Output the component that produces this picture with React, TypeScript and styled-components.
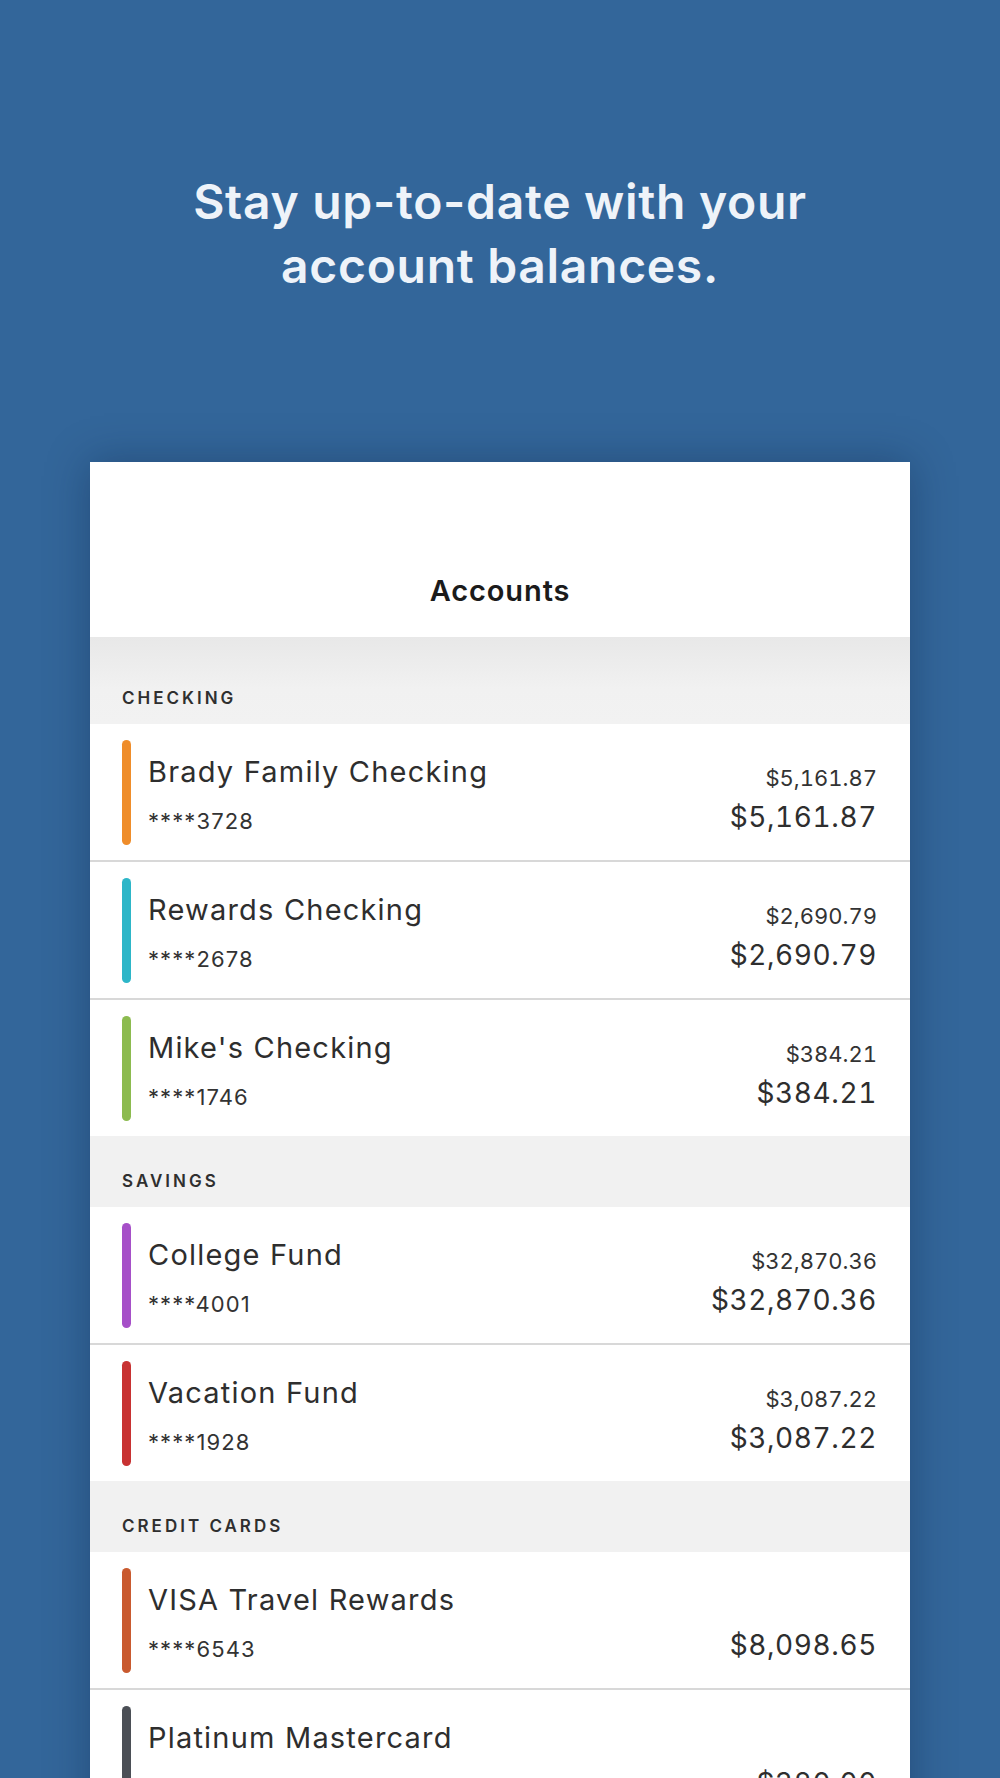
import React from 'react';
import styled, { createGlobalStyle } from 'styled-components';

const GlobalStyle = createGlobalStyle`
  html, body {
    margin: 0;
    padding: 0;
    background: #33669a;
    font-family: Inter, "Noto Sans", "Liberation Sans", sans-serif;
    -webkit-font-smoothing: antialiased;
  }
  body {
    height: 1778px;
    overflow: hidden;
  }
`;

const Page = styled.div`
  display: flex;
  flex-direction: column;
  align-items: center;
  padding-top: 170px;
`;

const Headline = styled.h1`
  margin: 0;
  font-size: 48px;
  line-height: 64px;
  font-weight: 600;
  color: #eef3f9;
  text-align: center;
  letter-spacing: 0.7px;
`;

const Card = styled.div`
  margin-top: 164px;
  width: 820px;
  background: #ffffff;
  box-shadow: 0 0 40px rgba(10, 30, 60, 0.35);
`;

const CardHeader = styled.div`
  height: 175px;
  box-sizing: border-box;
  display: flex;
  align-items: flex-end;
  justify-content: center;
  padding-bottom: 29px;
`;

const CardTitle = styled.div`
  font-size: 29px;
  line-height: 34px;
  font-weight: 600;
  letter-spacing: 0.9px;
  color: #1b1b1b;
`;

const Section = styled.div<{ $first?: boolean }>`
  height: ${(p) => (p.$first ? 87 : 71)}px;
  box-sizing: border-box;
  display: flex;
  align-items: flex-end;
  padding: 0 0 16px 32px;
  background: ${(p) =>
    p.$first ? 'linear-gradient(180deg, #e8e8e8 0%, #f1f1f1 60%, #f2f2f2 100%)' : '#f1f1f1'};
`;

const SectionLabel = styled.div`
  font-size: 17px;
  line-height: 20px;
  font-weight: 600;
  letter-spacing: 3px;
  color: #2f2f2f;
`;

const Row = styled.div<{ $divider: boolean }>`
  display: flex;
  box-sizing: border-box;
  height: ${(p) => (p.$divider ? 138 : 136)}px;
  padding: 16px 33px 15px 32px;
  border-bottom: ${(p) => (p.$divider ? '2px solid #d8d8d8' : 'none')};
`;

const ColorBar = styled.div<{ $color: string }>`
  width: 9px;
  border-radius: 5px;
  background: ${(p) => p.$color};
  flex-shrink: 0;
`;

const Info = styled.div`
  flex: 1;
  display: flex;
  flex-direction: column;
  padding: 14px 0 0 17px;
`;

const Name = styled.div`
  font-size: 29px;
  line-height: 36px;
  letter-spacing: 1.2px;
  color: #2e2e2e;
`;

const Mask = styled.div`
  margin-top: 17px;
  font-size: 22px;
  line-height: 28px;
  letter-spacing: 1.1px;
  color: #333333;
`;

const Amounts = styled.div`
  display: flex;
  flex-direction: column;
  align-items: flex-end;
  justify-content: flex-end;
  padding-bottom: 11px;
  font-variant-numeric: tabular-nums;
`;

const SmallAmount = styled.div`
  font-size: 22px;
  line-height: 28px;
  letter-spacing: 0px;
  color: #333333;
  margin-bottom: 8px;
`;

const BigAmount = styled.div`
  font-size: 28px;
  line-height: 34px;
  letter-spacing: 0.6px;
  color: #2e2e2e;
`;

type Account = {
  name: string;
  mask: string;
  color: string;
  available?: string;
  balance: string;
};

type Group = { title: string; accounts: Account[] };

const groups: Group[] = [
  {
    title: 'CHECKING',
    accounts: [
      { name: 'Brady Family Checking', mask: '****3728', color: '#ef8d2a', available: '$5,161.87', balance: '$5,161.87' },
      { name: 'Rewards Checking', mask: '****2678', color: '#2db6c8', available: '$2,690.79', balance: '$2,690.79' },
      { name: "Mike's Checking", mask: '****1746', color: '#8cbb4f', available: '$384.21', balance: '$384.21' },
    ],
  },
  {
    title: 'SAVINGS',
    accounts: [
      { name: 'College Fund', mask: '****4001', color: '#a64fc8', available: '$32,870.36', balance: '$32,870.36' },
      { name: 'Vacation Fund', mask: '****1928', color: '#c83232', available: '$3,087.22', balance: '$3,087.22' },
    ],
  },
  {
    title: 'CREDIT CARDS',
    accounts: [
      { name: 'VISA Travel Rewards', mask: '****6543', color: '#c95a2f', balance: '$8,098.65' },
      { name: 'Platinum Mastercard', mask: '****8824', color: '#4b4f56', balance: '$320.00' },
    ],
  },
];

export default function App() {
  return (
    <>
      <GlobalStyle />
      <Page>
        <Headline>
          Stay up-to-date with your
          <br />
          account balances.
        </Headline>
        <Card>
          <CardHeader>
            <CardTitle>Accounts</CardTitle>
          </CardHeader>
          {groups.map((g, gi) => (
            <React.Fragment key={g.title}>
              <Section $first={gi === 0}>
                <SectionLabel>{g.title}</SectionLabel>
              </Section>
              {g.accounts.map((a, ai) => (
                <Row key={a.name} $divider={ai < g.accounts.length - 1 || gi === groups.length - 1}>
                  <ColorBar $color={a.color} />
                  <Info>
                    <Name>{a.name}</Name>
                    <Mask>{a.mask}</Mask>
                  </Info>
                  <Amounts>
                    {a.available && <SmallAmount>{a.available}</SmallAmount>}
                    <BigAmount>{a.balance}</BigAmount>
                  </Amounts>
                </Row>
              ))}
            </React.Fragment>
          ))}
        </Card>
      </Page>
    </>
  );
}
